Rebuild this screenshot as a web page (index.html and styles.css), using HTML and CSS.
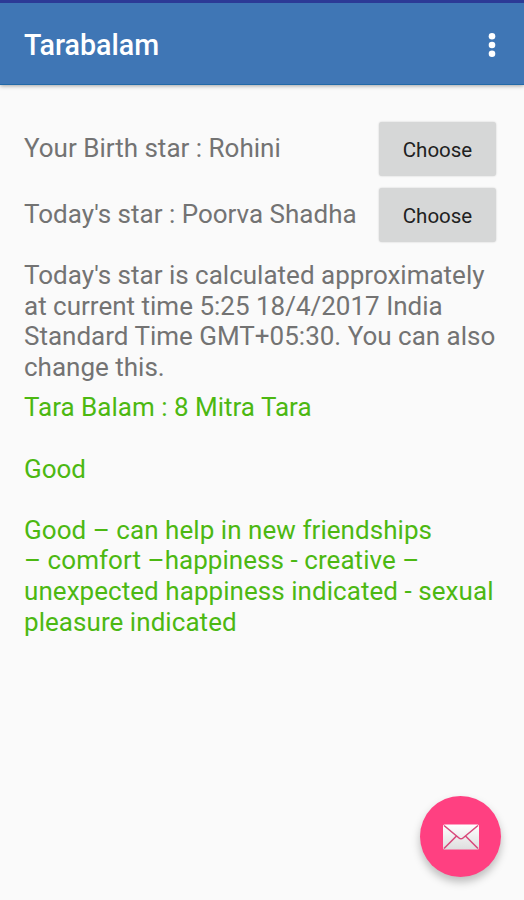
FILE: index.html
```html
<!DOCTYPE html>
<html lang="en">
<head>
  <meta charset="UTF-8" />
  <meta name="viewport" content="width=device-width, initial-scale=1.0"/>
  <title>Tarabalam</title>
  <link rel="stylesheet" href="styles.css">
</head>
<body>
  <header class="toolbar">
    <h1>Tarabalam</h1>
    <button class="menu-button" aria-label="More options">
      <svg width="8" height="26" viewBox="0 0 8 26">
        <circle cx="4" cy="3.3" r="3.3"/>
        <circle cx="4" cy="12" r="3.3"/>
        <circle cx="4" cy="20.8" r="3.3"/>
      </svg>
    </button>
  </header>

  <main>
    <div class="star-row">
      <span>Your Birth star : Rohini</span>
      <button class="choose">Choose</button>
    </div>
    <div class="star-row">
      <span>Today's star : Poorva Shadha</span>
      <button class="choose">Choose</button>
    </div>
    <p class="note">Today's star is calculated approximately<br>at current time 5:25 18/4/2017 India<br>Standard Time GMT+05:30. You can also<br>change this.</p>
    <div class="result">
      <p>Tara Balam : 8 Mitra Tara</p>
      <p>Good</p>
      <p>Good – can help in new friendships<br>– comfort –happiness - creative –<br>unexpected happiness indicated - sexual<br>pleasure indicated</p>
    </div>
  </main>

  <button class="fab" aria-label="Send mail">
    <svg width="38" height="26" viewBox="0 0 38 26">
      <defs>
        <linearGradient id="paper" x1="0" y1="0" x2="0" y2="1">
          <stop offset="0" stop-color="#fff"/>
          <stop offset="1" stop-color="#dedede"/>
        </linearGradient>
      </defs>
      <rect x="1" y="0.5" width="36" height="25" rx="1.5" fill="url(#paper)"/>
      <path d="M2 1.5L17 14q2 1.6 4 0L36 1.5M2 24.5L14.5 12M36 24.5L23.5 12" fill="none" stroke="#d84a7c" stroke-width="1.6"/>
    </svg>
  </button>
</body>
</html>
```

FILE: styles.css
```css
* {
  box-sizing: border-box;
}

body {
  margin: 0;
  min-height: 900px;
  font-family: Roboto, sans-serif;
  font-size: 26px;
  line-height: 30.6px;
  color: #737373;
  background: #fafafa;
}

h1, p {
  margin: 0;
}

button {
  border: none;
  font-family: inherit;
  cursor: pointer;
}

.toolbar {
  display: flex;
  align-items: center;
  justify-content: space-between;
  height: 85px;
  padding: 4px 24px 0;
  color: #fff;
  background: #3f76b5;
  border-top: 3px solid #2c3a96;
  border-bottom: 1px solid #2269a8;
  box-shadow: 0 1px 4px rgba(0, 0, 0, 0.35);
}

.toolbar h1 {
  font-size: 28.6px;
  font-weight: 500;
}

.menu-button {
  display: flex;
  padding: 0 4px;
  background: none;
}

.menu-button svg {
  fill: #fff;
}

main {
  padding: 31px 24px 0;
  white-space: nowrap;
}

.star-row {
  display: flex;
  align-items: center;
  justify-content: space-between;
  height: 66px;
}

.star-row span {
  padding-bottom: 2px;
}

.choose {
  width: 117px;
  height: 54px;
  margin-right: 4px;
  padding: 2px 0 0;
  font-size: 20.5px;
  color: #212121;
  background: #d6d7d7;
  border-radius: 3px;
  box-shadow: 0 0 2px rgba(0, 0, 0, 0.2);
}

.note {
  margin-top: 12px;
}

.result {
  margin-top: 10px;
  color: #4cb812;
}

.result p + p {
  margin-top: 30.6px;
}

.result p:last-child {
  letter-spacing: 0.05px;
}

.fab {
  position: fixed;
  right: 23px;
  bottom: 23px;
  display: flex;
  align-items: center;
  justify-content: center;
  width: 81px;
  height: 81px;
  padding: 0;
  background: #ff4081;
  border-radius: 50%;
  box-shadow: 0 5px 9px rgba(0, 0, 0, 0.25);
}
```
